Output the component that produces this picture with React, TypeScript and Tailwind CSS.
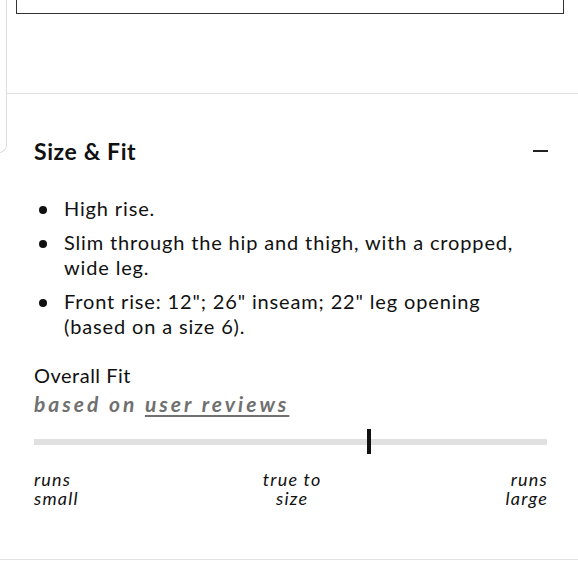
import React from "react";

const bullets = [
  "High rise.",
  "Slim through the hip and thigh, with a cropped, wide leg.",
  'Front rise: 12"; 26" inseam; 22" leg opening (based on a size 6).',
];

export default function App() {
  const fitPosition = 65; // percent along the track

  return (
    <div
      className="relative w-[578px] h-[580px] overflow-hidden bg-white text-[#111]"
      style={{ fontFamily: "Lato, 'Open Sans', sans-serif" }}
    >
      {/* edge of the card sitting to the left */}
      <div className="absolute left-[-12px] top-0 w-[19px] h-[153px] border-r border-b border-[#dcdcdc] rounded-br-[8px]" />

      {/* bottom of the previous block */}
      <div className="ml-[16px] mr-[14px] h-[14px] border-x border-b border-[#333]" />

      <div className="h-[79px]" />
      <div className="ml-[6px] border-t border-[#e2e2e2]" />

      {/* Size & Fit */}
      <section className="px-[34px] pr-[30px]">
        <div className="flex items-center justify-between mt-[42px]">
          <h2 className="text-[23px] font-bold leading-[30px] tracking-[0.6px]">Size &amp; Fit</h2>
          <span className="block w-[15px] h-[2px] bg-[#222]" />
        </div>

        <ul className="mt-[30px] flex flex-col gap-[9px]">
          {bullets.map((b, i) => (
            <li key={i} className="flex text-[20px] leading-[25px] tracking-[0.85px]">
              <span className="w-[30px] shrink-0 flex pt-[10px] pl-[5px]">
                <span className="block w-[8px] h-[8px] rounded-full bg-[#111]" />
              </span>
              <span className="pr-[20px]">{b}</span>
            </li>
          ))}
        </ul>

        <div className="mt-[22px]">
          <p className="text-[20px] leading-[28px] tracking-[0.5px]">Overall Fit</p>
          <p className="text-[21px] leading-[30px] italic font-bold text-[#707070] tracking-[3px]">
            based on <span className="underline underline-offset-[3px]">user reviews</span>
          </p>
        </div>

        <div className="mt-[10px] mr-[1px] relative h-[26px] flex items-center">
          <div className="w-full h-[6px] bg-[#e0e0e0]" />
          <div
            className="absolute top-0 w-[4px] h-[25px] bg-[#111]"
            style={{ left: `${fitPosition}%` }}
          />
        </div>

        <div className="mt-[15px] flex justify-between italic text-[18px] leading-[19px] tracking-[1.2px]">
          <span className="text-left">runs<br />small</span>
          <span className="text-center">true to<br />size</span>
          <span className="text-right">runs<br />large</span>
        </div>
      </section>

      <div className="absolute left-0 right-0 top-[559px] border-t border-[#e2e2e2]" />
    </div>
  );
}
